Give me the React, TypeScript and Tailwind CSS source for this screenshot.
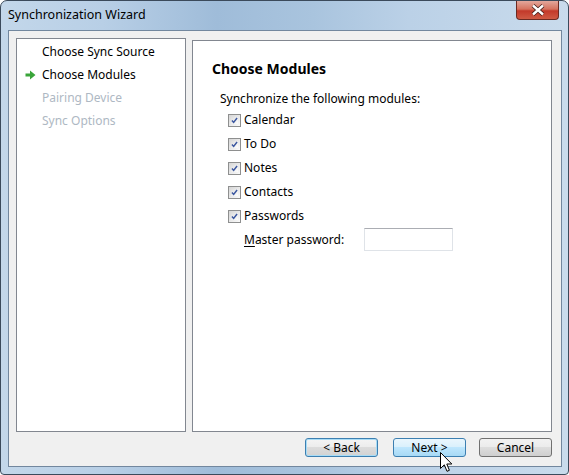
import { useState } from 'react';

const font = { fontFamily: '"Noto Sans", "Liberation Sans", sans-serif' };

const modules = ['Calendar', 'To Do', 'Notes', 'Contacts', 'Passwords'];

const steps = [
  { label: 'Choose Sync Source', state: 'done' },
  { label: 'Choose Modules', state: 'current' },
  { label: 'Pairing Device', state: 'todo' },
  { label: 'Sync Options', state: 'todo' },
];

function CheckBox({ checked, onToggle }: { checked: boolean; onToggle: () => void }) {
  return (
    <button
      onClick={onToggle}
      className="w-[13px] h-[13px] border border-[#8e8f8f] bg-gradient-to-br from-[#d6d6d6] to-[#fbfbfb] p-[2px] flex items-center justify-center"
    >
      <span className="w-full h-full bg-gradient-to-br from-[#dedede] to-[#fdfdfd] flex items-center justify-center">
        {checked && (
          <svg width="9" height="9" viewBox="0 0 9 9">
            <path d="M1.2 4.6 L3.4 7 L7.8 1.2" fill="none" stroke="#3b57a0" strokeWidth="1.9" />
          </svg>
        )}
      </span>
    </button>
  );
}

function GreenArrow() {
  return (
    <svg width="11" height="10" viewBox="0 0 11 10">
      <path d="M0.5 3.5 H5 V0.5 L10.5 5 L5 9.5 V6.5 H0.5 Z" fill="#3aa53a" />
    </svg>
  );
}

function Cursor() {
  return (
    <svg width="13" height="21" viewBox="0 0 13 21">
      <path
        d="M0.5 0.5 L0.5 16.5 L4.3 12.8 L7 19.3 L9.4 18.3 L6.8 12 L11.8 12 Z"
        fill="#ffffff"
        stroke="#000000"
        strokeWidth="1"
        strokeLinejoin="miter"
      />
    </svg>
  );
}

export default function App() {
  const [checked, setChecked] = useState<Record<string, boolean>>({
    Calendar: true,
    'To Do': true,
    Notes: true,
    Contacts: true,
    Passwords: true,
  });
  const [password, setPassword] = useState('');

  return (
    <div style={font} className="w-[569px] h-[475px] bg-white overflow-hidden text-[12px] text-black">
      <div className="relative w-full h-full rounded-t-[7px] rounded-b-[4px] border border-[#3b4a5b] bg-[linear-gradient(90deg,#c3d7ea_0%,#b8cfe6_18%,#9fbcd9_38%,#a9c4de_55%,#bbd1e7_72%,#c9dbec_100%)] flex flex-col">
        {/* title bar */}
        <div className="h-[29px] flex items-start">
          <div className="pl-[7px] pt-[4px] text-[12.5px] text-black leading-[20px]">Synchronization Wizard</div>
          <div className="flex-1" />
          <button className="mr-[9px] w-[43px] h-[19px] rounded-b-[4px] border border-t-0 border-[#6b2a22] bg-[linear-gradient(180deg,#e3a79c_0%,#d5735f_45%,#c3392a_55%,#cf5a44_100%)] flex items-center justify-center">
            <svg width="14" height="12" viewBox="0 0 14 12">
              <path d="M2 1.5 L12 10.5 M12 1.5 L2 10.5" stroke="#3d1a16" strokeWidth="4" />
              <path d="M2 1.5 L12 10.5 M12 1.5 L2 10.5" stroke="#ffffff" strokeWidth="2.4" />
            </svg>
          </button>
        </div>

        {/* client area */}
        <div className="flex-1 flex pl-[7px] pr-[6px] pb-[7px]">
          <div className="flex-1 border border-[#72879e] bg-[#f0f0f0] flex flex-col">
            <div className="flex items-end pl-[7px] pt-[7px]">
              {/* steps */}
              <div className="w-[170px] h-[394px] border border-[#828790] bg-white pt-[1px]">
                {steps.map(s => (
                  <div key={s.label} className="h-[23px] flex items-center">
                    <div className="w-[25px] pl-[8px] flex items-center">
                      {s.state === 'current' && <GreenArrow />}
                    </div>
                    <span className={s.state === 'todo' ? 'text-[#aeb8c3]' : 'text-black'}>{s.label}</span>
                  </div>
                ))}
              </div>

              {/* page */}
              <div className="ml-[6px] w-[360px] h-[392px] border border-[#828790] bg-white">
                <div className="pl-[19px] mt-[18px] h-[20px] leading-[20px] text-[14px] font-bold">
                  Choose Modules
                </div>
                <div className="pl-[27px] mt-[11px] h-[18px] leading-[18px]">
                  Synchronize the following modules:
                </div>
                <div className="pl-[35px]">
                  {modules.map(m => (
                    <div key={m} className="h-[24px] flex items-center gap-[3px]">
                      <CheckBox
                        checked={checked[m]}
                        onToggle={() => setChecked(prev => ({ ...prev, [m]: !prev[m] }))}
                      />
                      <span>{m}</span>
                    </div>
                  ))}
                  <div className="h-[23px] flex items-center pl-[16px]">
                    <span className="w-[120px]">
                      <span className="underline underline-offset-2">M</span>aster password:
                    </span>
                    <input
                      type="password"
                      value={password}
                      onChange={e => setPassword(e.target.value)}
                      className="w-[89px] h-[23px] border border-[#dfe3e8] border-t-[#abadb3] bg-white outline-none"
                    />
                  </div>
                </div>
              </div>
            </div>

            {/* buttons */}
            <div className="relative flex justify-end pr-[9px] mt-[6px]">
              <button className="w-[73px] h-[19px] rounded-[3px] border border-[#3c7fb1] bg-[linear-gradient(180deg,#f4f4f4_0%,#ececec_50%,#dcdcdc_50%,#d2d2d2_100%)] shadow-[inset_0_0_0_1px_#a8dcf6] leading-[16px] text-center">
                &lt; Back
              </button>
              <button className="ml-[15px] w-[73px] h-[19px] rounded-[3px] border border-[#3c7fb1] bg-[linear-gradient(180deg,#eaf6fd_0%,#d9f0fc_50%,#bee6fd_50%,#a7d9f5_100%)] leading-[16px] text-center">
                Next &gt;
              </button>
              <button className="ml-[13px] w-[73px] h-[19px] rounded-[3px] border border-[#707070] bg-[linear-gradient(180deg,#f2f2f2_0%,#ebebeb_50%,#dddddd_50%,#cfcfcf_100%)] leading-[16px] text-center">
                Cancel
              </button>
              <div className="absolute left-[431px] top-[14px]">
                <Cursor />
              </div>
            </div>
          </div>
        </div>
      </div>
    </div>
  );
}
